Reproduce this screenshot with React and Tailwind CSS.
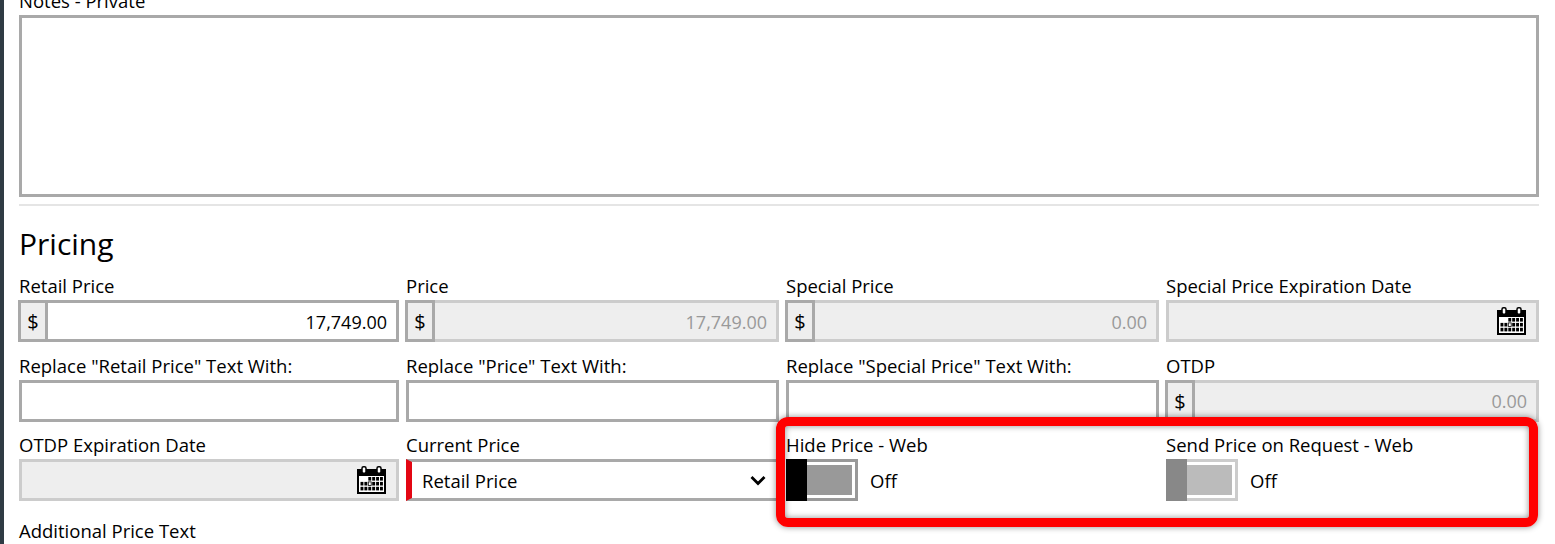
const FONT = "font-['Open_Sans','Noto_Sans',sans-serif]";

function Calendar() {
  const cells = [];
  for (let r = 0; r < 3; r++) {
    for (let c = 0; c < 6; c++) {
      if (r === 0 && c < 2) continue;
      const isToday = r === 1 && c === 2;
      cells.push(
        <rect
          key={`${r}-${c}`}
          x={3.5 + c * 3.9}
          y={11 + r * 4.9}
          width="2.9"
          height="3.6"
          fill={isToday ? "#ffffff" : "#000000"}
          stroke={isToday ? "#000000" : "none"}
          strokeWidth={isToday ? 0.8 : 0}
        />
      );
    }
  }
  return (
    <svg width="29" height="28" viewBox="0 0 29 28" className="shrink-0">
      <path d="M0 3h29v25H0z" fill="#000" />
      <rect x="2" y="10" width="25" height="16" fill="#fff" />
      <rect x="5" y="0.8" width="4" height="6.5" rx="1.5" fill="#fff" stroke="#000" strokeWidth="1.5" />
      <rect x="20" y="0.8" width="4" height="6.5" rx="1.5" fill="#fff" stroke="#000" strokeWidth="1.5" />
      {cells}
    </svg>
  );
}

function Label({ children }) {
  return <div className="h-[24px] leading-[24px] whitespace-nowrap text-[18.5px]">{children}</div>;
}

function Field({ label, children }) {
  return (
    <div>
      <Label>{label}</Label>
      <div className="h-[42px] mt-[2px]">{children}</div>
    </div>
  );
}

function Text() {
  return <div className="h-[42px] border-[3px] border-[#a9a9a9] bg-white" />;
}

function Money({ value, disabled }) {
  return (
    <div className="flex h-[42px] ml-[-1px]">
      <div className="w-[30px] shrink-0 border-[3px] border-[#a9a9a9] bg-[#eeeeee] flex items-center justify-center pt-[2px] text-[20px]">$</div>
      <div
        className={
          disabled
            ? "flex-1 border-[3px] border-l-0 border-[#cccccc] bg-[#eeeeee] text-[#999999] flex items-center justify-end pr-[9px] pt-[2px]"
            : "flex-1 border-[3px] border-l-0 border-[#a9a9a9] bg-white flex items-center justify-end pr-[9px] pt-[2px]"
        }
      >
        {value}
      </div>
    </div>
  );
}

function DateBox() {
  return (
    <div className="h-[42px] border-[3px] border-[#cccccc] bg-[#eeeeee] flex items-center justify-end pr-[10px]">
      <Calendar />
    </div>
  );
}

function Toggle({ muted }) {
  return (
    <div className="flex items-center h-[42px]">
      <div className={muted ? "relative w-[72px] h-[42px] border-[3px] border-[#cccccc] p-[3px]" : "relative w-[72px] h-[42px] border-[3px] border-[#999999] p-[3px]"}>
        <div className={muted ? "h-full bg-[#bbbbbb]" : "h-full bg-[#999999]"} />
        <div className={muted ? "absolute left-[-3px] top-[-3px] bottom-[-3px] w-[21px] bg-[#888888]" : "absolute left-[-3px] top-[-3px] bottom-[-3px] w-[21px] bg-black"} />
      </div>
      <span className="ml-[12px] pt-[2px] text-[18.5px]">Off</span>
    </div>
  );
}

export default function App() {
  return (
    <div className={`${FONT} relative h-[544px] w-[1555px] overflow-hidden bg-white text-black text-[18px] flex`}>
      <div className="w-[4px] bg-[#2f3b44] shrink-0" />
      <div className="ml-[15px] w-[1520px] mt-[-11px]">
        <Label>Notes - Private</Label>
        <div className="mt-[2px] h-[182px] border-[3px] border-[#a9a9a9] bg-white" />
        <div className="mt-[7px] h-[2px] bg-[#e5e5e5]" />
        <h2 className="mt-[19px] h-[38px] leading-[38px] text-[30px] font-normal">Pricing</h2>
        <div className="mt-[11px] grid grid-cols-[387px_380px_380px_373px] auto-rows-[79.5px]">
          <div className="pr-[7px]"><Field label="Retail Price"><Money value="17,749.00" /></Field></div>
          <div className="pr-[7px]"><Field label="Price"><Money value="17,749.00" disabled /></Field></div>
          <div className="pr-[7px]"><Field label="Special Price"><Money value="0.00" disabled /></Field></div>
          <div><Field label="Special Price Expiration Date"><DateBox /></Field></div>

          <div className="pr-[7px]"><Field label={'Replace "Retail Price" Text With:'}><Text /></Field></div>
          <div className="pr-[7px]"><Field label={'Replace "Price" Text With:'}><Text /></Field></div>
          <div className="pr-[7px]"><Field label={'Replace "Special Price" Text With:'}><Text /></Field></div>
          <div><Field label="OTDP"><Money value="0.00" disabled /></Field></div>

          <div className="pr-[7px]"><Field label="OTDP Expiration Date"><DateBox /></Field></div>
          <div className="pr-[7px]">
            <Field label="Current Price">
              <div className="h-[42px] border-y-[3px] border-[#a9a9a9] border-l-[6px] border-l-[#e30613] bg-white flex items-center justify-between pl-[10px] pr-[13px]">
                <span className="pt-[2px] text-[18.5px]">Retail Price</span>
                <svg width="16" height="11" viewBox="0 0 16 11">
                  <path d="M1.5 2 L8 8.5 L14.5 2" fill="none" stroke="#000" strokeWidth="2.8" />
                </svg>
              </div>
            </Field>
          </div>
          <div className="pr-[7px]"><Field label="Hide Price - Web"><Toggle /></Field></div>
          <div><Field label="Send Price on Request - Web"><Toggle muted /></Field></div>

          <div className="col-span-4 pt-[6px]"><Label>Additional Price Text</Label></div>
        </div>
      </div>
      <div className="absolute left-[776px] top-[417px] w-[762px] h-[110px] rounded-[12px] border-[9px] border-[#ff0000] shadow-[0_0_6px_rgba(0,0,0,0.45),inset_0_0_6px_rgba(0,0,0,0.45)]" />
    </div>
  );
}
